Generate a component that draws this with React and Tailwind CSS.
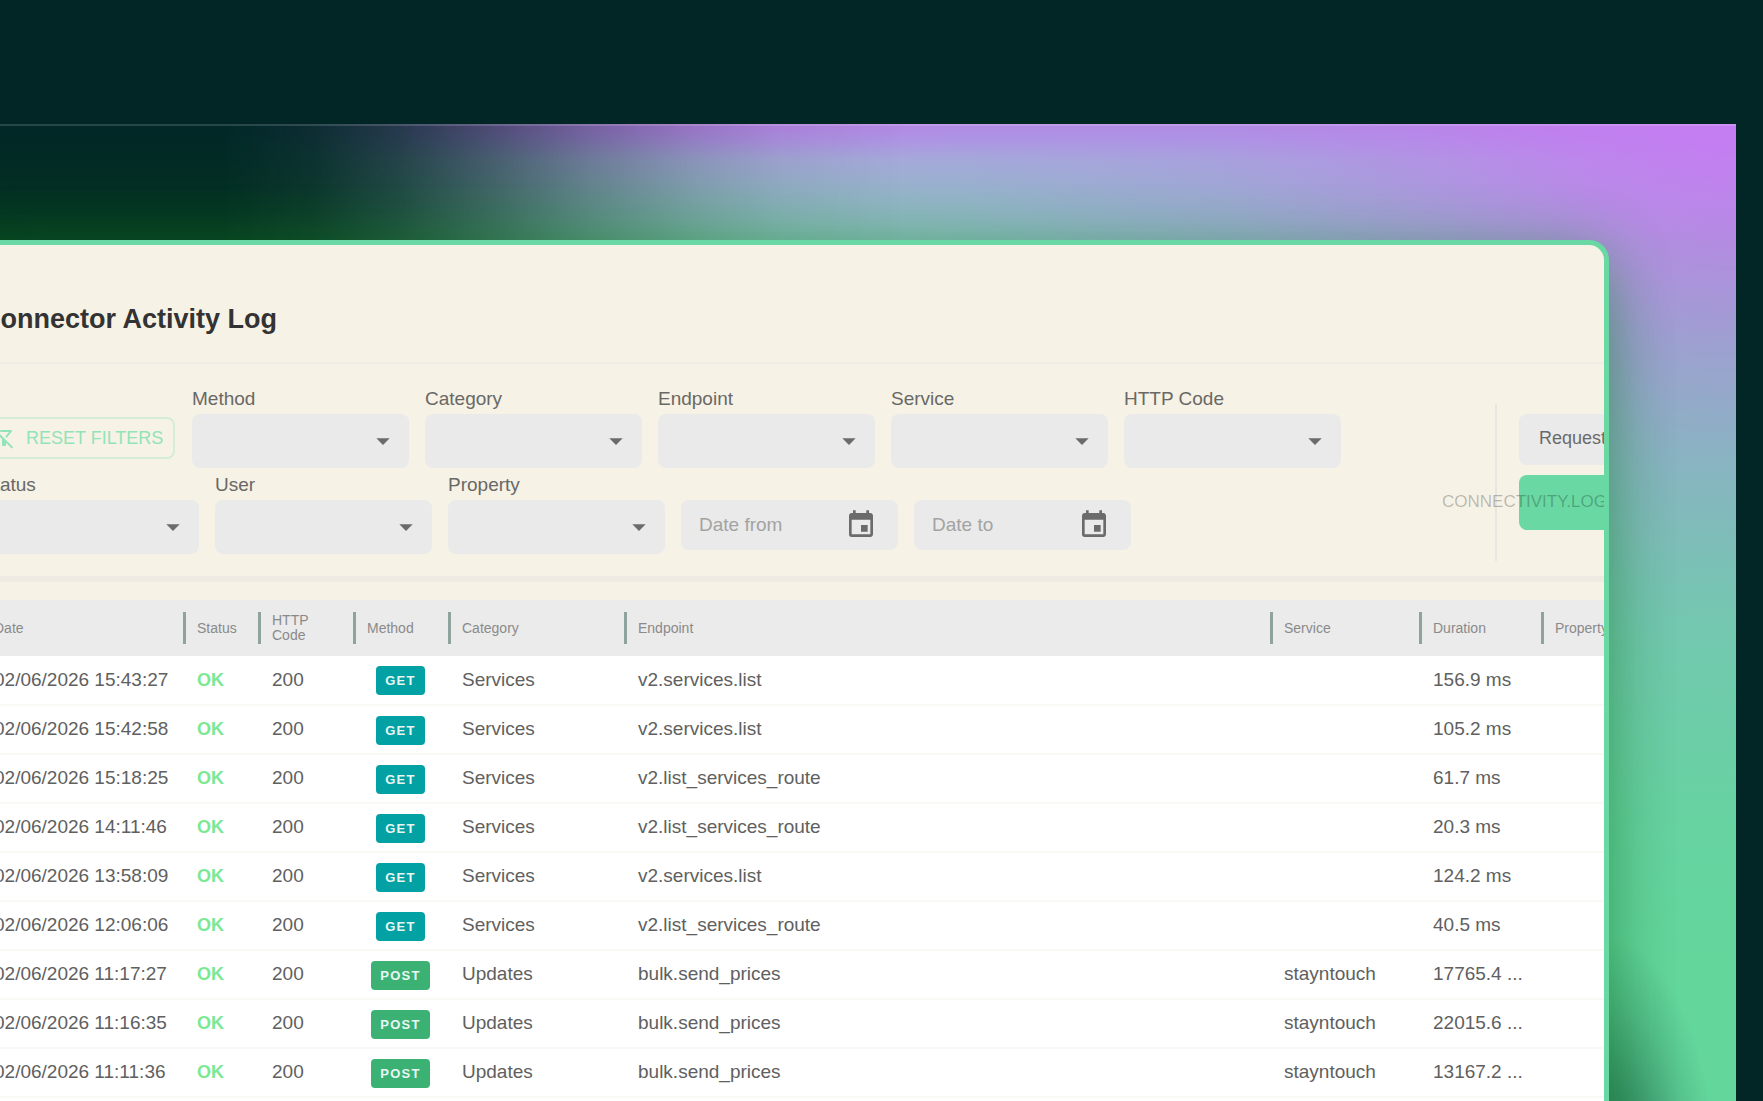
import React from "react";
import { MdArrowDropDown, MdEvent, MdOutlineFilterAltOff } from "react-icons/md";

const rows = [
  { date: "02/06/2026 15:43:27", method: "GET", category: "Services", endpoint: "v2.services.list", service: "", duration: "156.9 ms" },
  { date: "02/06/2026 15:42:58", method: "GET", category: "Services", endpoint: "v2.services.list", service: "", duration: "105.2 ms" },
  { date: "02/06/2026 15:18:25", method: "GET", category: "Services", endpoint: "v2.list_services_route", service: "", duration: "61.7 ms" },
  { date: "02/06/2026 14:11:46", method: "GET", category: "Services", endpoint: "v2.list_services_route", service: "", duration: "20.3 ms" },
  { date: "02/06/2026 13:58:09", method: "GET", category: "Services", endpoint: "v2.services.list", service: "", duration: "124.2 ms" },
  { date: "02/06/2026 12:06:06", method: "GET", category: "Services", endpoint: "v2.list_services_route", service: "", duration: "40.5 ms" },
  { date: "02/06/2026 11:17:27", method: "POST", category: "Updates", endpoint: "bulk.send_prices", service: "stayntouch", duration: "17765.4 ..." },
  { date: "02/06/2026 11:16:35", method: "POST", category: "Updates", endpoint: "bulk.send_prices", service: "stayntouch", duration: "22015.6 ..." },
  { date: "02/06/2026 11:11:36", method: "POST", category: "Updates", endpoint: "bulk.send_prices", service: "stayntouch", duration: "13167.2 ..." },
];

const columns = ["Date", "Status", "HTTP Code", "Method", "Category", "Endpoint", "Service", "Duration", "Property"];

const SelectFilter = ({ label }) => (
  <label className="block w-[217px] shrink-0">
    <span className="block h-[22px] text-[19px] leading-[22px] text-[#6a6865]">{label}</span>
    <span className="relative mt-1 block">
      <select className="block h-[54px] w-full appearance-none rounded-lg bg-[#eaeaea] px-4 text-[19px]" />
      <MdArrowDropDown size={32} className="pointer-events-none absolute right-2.5 top-[11px] text-[#6b6b6b]" />
    </span>
  </label>
);

const DateFilter = ({ label }) => (
  <label className="mt-[26px] flex h-[50px] w-[217px] shrink-0 items-center rounded-lg bg-[#eaeaea] pl-[18px] pr-[21px]">
    <input
      type="text"
      aria-label={label}
      placeholder={label}
      className="w-full min-w-0 bg-transparent text-[19px] outline-none placeholder:text-[#a3a3a3]"
    />
    <MdEvent size={32} className="shrink-0 text-[#6b6b6b]" />
  </label>
);

const MethodBadge = ({ method }) => (
  <span
    className={`inline-block h-[29px] rounded px-[9px] text-[13px] leading-[29px] font-bold tracking-widest text-[#e8f7f3] ${
      method === "GET" ? "bg-[#02a1a3]" : "bg-[#3bb273]"
    }`}
  >
    {method}
  </span>
);

const Filters = () => (
  <div className="flex h-[218px] border-b-[6px] border-[#f0ebe2] pt-6">
    <div className="flex w-[1530px] shrink-0 flex-col">
      <div className="flex gap-4">
        <button className="mt-[29px] flex h-[42px] w-[210px] mr-px items-center gap-2.5 rounded-lg border-2 border-[#d5ecd6] pl-[25px] text-[18px] whitespace-nowrap text-[#93e3b8]">
          <MdOutlineFilterAltOff size={24} className="shrink-0" />
          RESET FILTERS
        </button>
        <SelectFilter label="Method" />
        <SelectFilter label="Category" />
        <SelectFilter label="Endpoint" />
        <SelectFilter label="Service" />
        <SelectFilter label="HTTP Code" />
      </div>
      <div className="mt-1.5 flex gap-4 pl-[17px]">
        <SelectFilter label="Status" />
        <SelectFilter label="User" />
        <SelectFilter label="Property" />
        <DateFilter label="Date from" />
        <DateFilter label="Date to" />
      </div>
    </div>

    {/* Actions, cut off by the card edge */}
    <div className="mt-4 h-[157px] w-[120px] shrink-0 border-l-2 border-[#e9e5e2] pt-2.5 pl-[22px]">
      <button className="block h-[51px] w-[180px] rounded-lg bg-[#eaeaea] pb-0.5 pl-5 text-left text-[18px] text-[#6a6a6a]">
        Requests
      </button>
      <button className="mt-2.5 flex h-[55px] w-[180px] items-center rounded-lg bg-[#69d8a3] pb-0.5 text-[17px] whitespace-nowrap text-black/25">
        <span className="-ml-[77px]">CONNECTIVITY.LOGS</span>
      </button>
    </div>
  </div>
);

const LogTable = () => (
  <table className="w-full table-fixed border-collapse text-left">
    <colgroup>
      <col className="w-[218px]" />
      <col className="w-[75px]" />
      <col className="w-[95px]" />
      <col className="w-[95px]" />
      <col className="w-[176px]" />
      <col />
      <col className="w-[149px]" />
      <col className="w-[122px]" />
      <col className="w-[63px]" />
    </colgroup>
    <thead className="bg-[#ebebeb] text-[14px] leading-[15px] text-[#8a8a8a]">
      <tr className="h-14">
        {columns.map((name, i) => (
          <th key={name} className="p-0 font-normal">
            <div
              className={`flex h-8 items-center ${
                i === 0 ? "pl-[29px]" : "border-l-[3px] border-[#8ea39d] pl-[11px]"
              } ${name === "HTTP Code" ? "pr-10" : ""}`}
            >
              {name}
            </div>
          </th>
        ))}
      </tr>
    </thead>
    <tbody className="bg-white text-[19px] whitespace-nowrap text-[#606060]">
      {rows.map((row) => (
        <tr key={row.date} className="h-[49px] border-b-2 border-[#fbf9f6]">
          <td className="p-0 pl-[29px]">{row.date}</td>
          <td className="p-0 pl-[14px] text-[18px] font-bold text-[#7be894]">OK</td>
          <td className="p-0 pl-[14px]">200</td>
          <td className="p-0 text-center">
            <MethodBadge method={row.method} />
          </td>
          <td className="p-0 pl-[14px]">{row.category}</td>
          <td className="p-0 pl-[14px]">{row.endpoint}</td>
          <td className="p-0 pl-[14px]">{row.service}</td>
          <td className="p-0 pl-[14px]">{row.duration}</td>
          <td className="p-0" />
        </tr>
      ))}
    </tbody>
  </table>
);

const App = () => {
  return (
    <div className="h-screen overflow-hidden bg-[#022626] pt-[124px] pr-[27px] font-['Liberation_Sans',Arial,sans-serif]">
      <div className="relative isolate h-full overflow-hidden bg-[radial-gradient(120px_250px_at_calc(100%_-_140px)_calc(100%_+_80px),#0a4a30b0_0%,#0a4a3078_40%,#0a4a3028_75%,#0a4a3000_100%),radial-gradient(1250px_840px_at_100%_0,#c57df2_0%,#c07fefcc_14%,#b48ae8a8_26%,#a49ae080_42%,#94aad84c_62%,#88b8cc18_84%,#80c0c000_100%),linear-gradient(to_bottom,#be7ce8_0px,#b78ce8_16px,#aba8da_36px,#97b6c6_68px,#7dbfa8_118px,#6ccfa0_280px,#63d69c_460px)]">
        {/* Dark fade on the left side */}
        <div className="absolute inset-0 -z-10 bg-[linear-gradient(to_bottom,#012727_0px,#022c24_50px,#063a20_112px)] [mask-image:linear-gradient(to_right,#000_13%,#000000f0_18%,#000000cc_23%,#00000090_29%,#0000005c_34%,#0000002c_40%,#00000010_45%,transparent_52%)]" />
        <div className="h-0.5 border-t-2 border-white/15" />
        <div className="mt-[114px] mr-[127px] -ml-10 h-[1100px] rounded-[20px] border-[5px] border-[#69d8a3] bg-[#f6f2e6] shadow-[0_10px_60px_#148c2870,0_60px_70px_#00302033]">
          <div className="h-full overflow-hidden rounded-[15px]">
            <header className="flex h-[119px] items-center border-b-2 border-[#f1ede6] pt-[30px] pl-4">
              <h1 className="text-[27px] leading-8 font-bold text-[#333]">Connector Activity Log</h1>
            </header>
            <Filters />
            <div className="mt-[18px] h-full bg-white">
              <LogTable />
            </div>
          </div>
        </div>
      </div>
    </div>
  );
};

export default App;
